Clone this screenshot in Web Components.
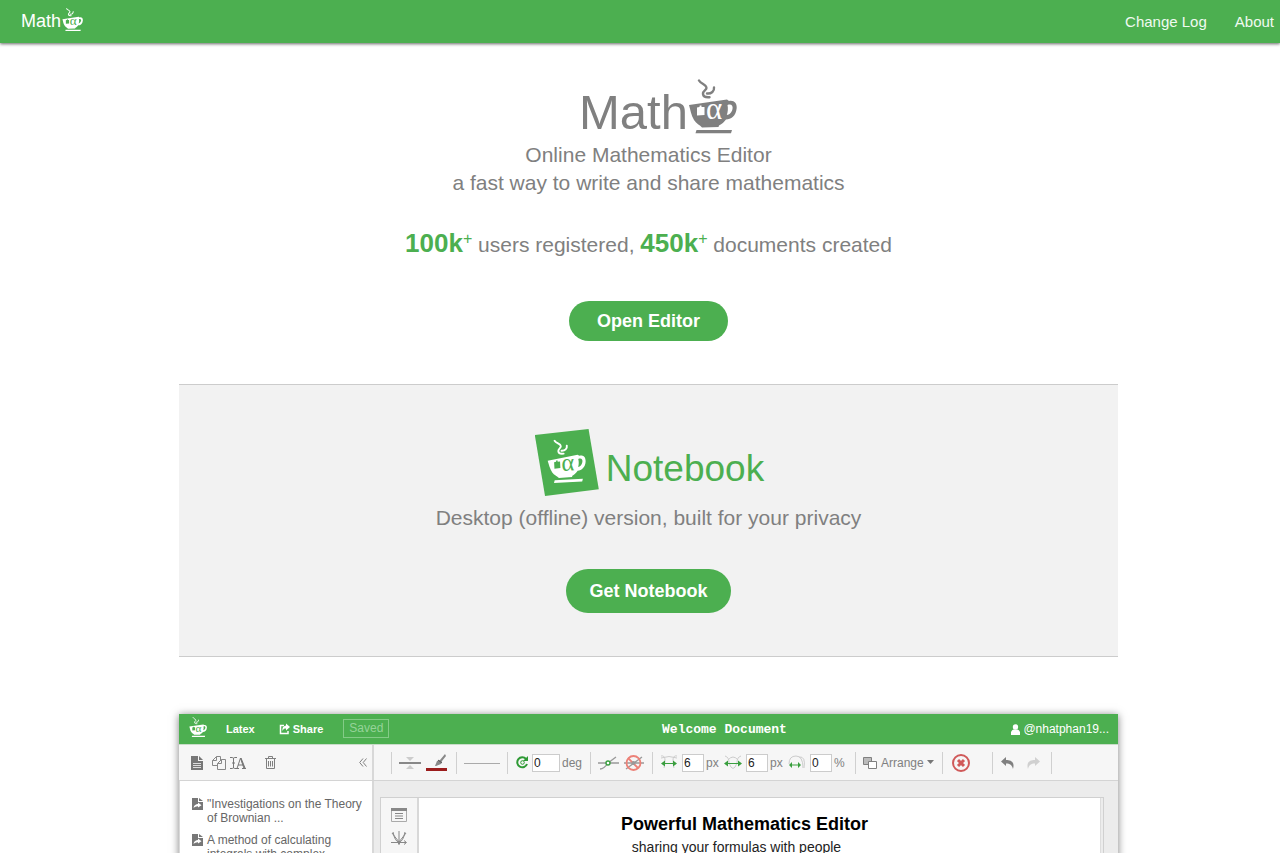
<!DOCTYPE html>
<html lang="en">
<head>
<meta charset="utf-8">
<title>Mathcha</title>
<style>
body { margin: 0; background: #fff; color: #808080; font-family: "Liberation Sans", Arial, sans-serif; }
</style>
</head>
<body>
<mc-header></mc-header>
<mc-main>
  <mc-hero></mc-hero>
  <mc-notebook></mc-notebook>
  <mc-editor>
    <mc-doc-item>"Investigations on the Theory of Brownian ...</mc-doc-item>
    <mc-doc-item>A method of calculating integrals with complex</mc-doc-item>
  </mc-editor>
</mc-main>
<script>
class Base extends HTMLElement {
  constructor() {
    super();
    const t = document.createElement('template');
    t.innerHTML = this.constructor.markup;
    this.attachShadow({ mode: 'open' }).append(t.content.cloneNode(true));
  }
}

/* Tea cup; fill follows currentColor, cut-outs follow --cut */
customElements.define('mc-cup', class extends Base {
  static markup = `
<style>:host{display:block;aspect-ratio:49/55;flex:none}svg{display:block;width:100%;height:100%}text{font:31px "Liberation Serif",serif;fill:var(--cut,#fff)}</style>
<svg viewBox="0 0 49 55" aria-hidden="true">
<g fill="none" stroke="currentColor" stroke-width="2.4" stroke-linecap="round"><path d="M11 1.500C13 5 18 5.500 18.500 8.500C19 11 14.500 12 15 15C15.300 17.500 18 18.500 21.500 18.200"/><path d="M26 8.500C26.500 12 23.500 15 19 14.500"/></g>
<path fill="currentColor" d="M1 26L39 20.500L41 22C46 21 49 24 48.700 29C48 37 43 40.500 38 40.500C36 43 34 45 31 46.500L30.500 48L14 48.500C12 46 8 44.500 6 41C3 36 2.500 31 1 26Z"/>
<path fill="var(--cut,#fff)" d="M39.500 26C43 24.500 45.300 26.500 44.500 30C43.500 34 41.500 35.500 38.800 36C40 33 40.200 29 39.500 26ZM9 28.500L11.500 28L11.700 26.500L13.500 26.500L13.500 28L16.500 28L16.500 36L9 36.500Z"/>
<text x="18" y="40">α</text>
<path fill="currentColor" d="M8.500 51H44L43 54.300H7.500Z"/></svg>`;
});

customElements.define('mc-header', class extends Base {
  static markup = `
<style>:host{display:block}
header{display:flex;justify-content:space-between;align-items:center;height:43px;padding:0 6px 0 21px;background:#4caf50;color:#fff;box-shadow:0 1px 3px rgba(0,0,0,.6)}
.logo{display:flex;align-items:center;gap:1px;font-size:18px;color:inherit;text-decoration:none}
mc-cup{width:21px;--cut:#4caf50;padding-bottom:4px}
nav{display:flex;gap:28px;font-size:15px}nav a{color:#f0faf0;text-decoration:none}</style>
<header><a class="logo" href="#">Math<mc-cup></mc-cup></a><nav><a href="#log">Change Log</a><a href="#about">About</a></nav></header>`;
});

customElements.define('mc-main', class extends Base {
  static markup = `<style>:host{display:block;padding-left:17px}main{max-width:939px;margin:0 auto}</style><main><slot></slot></main>`;
});

customElements.define('mc-button', class extends Base {
  static markup = `<style>:host{display:block}button{display:block;margin:0 auto;border:0;border-radius:22px;height:var(--h,40px);padding:0 var(--pad,28px);background:#4caf50;color:#fff;font:bold 18px "Liberation Sans",Arial,sans-serif;cursor:pointer}</style><button type="button"><slot></slot></button>`;
});

customElements.define('mc-hero', class extends Base {
  static markup = `
<style>:host{display:block;padding:36px 0 43px;text-align:center;font-size:21px;line-height:28px}
h1{display:flex;justify-content:center;height:62px;margin:0;padding-left:19px;font-weight:400;font-size:49px;line-height:66px}
mc-cup{width:49px;height:55px}p{margin:0}
.stats{margin:30px 0 40px;line-height:32px}b{font-size:26px}b,sup{color:#4caf50}sup{font-size:16px;line-height:0}</style>
<h1>Math<mc-cup></mc-cup></h1>
<p>Online Mathematics Editor<br>a fast way to write and share mathematics</p>
<p class="stats"><b>100k</b><sup>+</sup> users registered, <b>450k</b><sup>+</sup> documents created</p>
<mc-button>Open Editor</mc-button>`;
});

customElements.define('mc-notebook', class extends Base {
  static markup = `
<style>:host{display:block}
section{padding:44px 0 43px;background:#f2f2f2;border:solid #ccc;border-width:1px 0;text-align:center}
h2{display:flex;justify-content:center;gap:7px;margin:0 0 8px;padding-left:2px;height:67px;font-weight:400;font-size:37px;line-height:79px;color:#4caf50}
.tile{display:grid;place-items:center;width:64px;height:67px;background:#4caf50;clip-path:polygon(0 9%,84% 0,100% 90%,16% 100%)}
mc-cup{width:39px;color:#fff;--cut:#4caf50;transform:rotate(-3deg);padding-bottom:4px}
p{margin:0 0 37px;font-size:21px;line-height:28px}mc-button{--h:44px;--pad:23px}</style>
<section><h2><span class="tile"><mc-cup></mc-cup></span>Notebook</h2><p>Desktop (offline) version, built for your privacy</p><mc-button>Get Notebook</mc-button></section>`;
});

customElements.define('mc-doc-item', class extends Base {
  static markup = `
<style>:host{display:flex;gap:4px;margin-bottom:8px;font-size:12px;line-height:14px;color:#666}svg{flex:none;margin-top:1px}</style>
<svg width="11" height="12" viewBox="0 0 11 12" aria-hidden="true"><path fill="#777" d="M0 0H6V4H11V12H0Z M7 0L11 3H7Z"/><path d="M1.500 10C2 7 4 6 6 6V4.500L9.500 7.300L6 9.500V8.300C4 8.200 3 9 1.500 10Z" fill="#fff"/></svg><span><slot></slot></span>`;
});

/* Toolbar number box with its icon and unit */
customElements.define('mc-field', class extends Base {
  static icons = {
    turn: '<path d="M11 4A5 5 0 1 0 12 9" fill="none" stroke="#2f9a35" stroke-width="2"/><path d="M13 1V6H8Z" fill="#2f9a35"/><circle cx="7.500" cy="7.500" r="1.800" fill="none" stroke="#2f9a35"/>',
    inner: '<path d="M1 1C5 0 6 4 4 13M17 1C13 0 12 4 14 13M1 3Q9 0 17 3" fill="none" stroke="#ccc"/><path d="M1 8.500L5 5.500V8H13V5.500L17 8.500L13 11.500V9H5V11.500Z" fill="#3a9f3f"/>',
    outer: '<path d="M1 1Q5 2 5 8Q9 19 13 8Q13 2 17 1M4 5Q9-1 14 5" fill="none" stroke="#ccc"/><path d="M0 8.500L4 5.500V8H14V5.500L18 8.500L14 11.500V9H4V11.500Z" fill="#3a9f3f"/>',
    loop: '<path d="M1 9Q1 1 8 1Q15 1 15 13M11 2Q18 1 16 13" fill="none" stroke="#ccc"/><path d="M1 10L4 7V9.500H10V7L13 10L10 13V10.500H4V13Z" fill="#3a9f3f"/>'
  };
  static markup = `
<style>:host{display:block}label{display:flex;align-items:center;gap:2px;color:#808080;font-size:12px}svg{flex:none}
input{box-sizing:border-box;width:var(--w,22px);height:18px;margin:0;padding:0 1px;border:1px solid #ccc;background:#fff;color:#222;font:12px "Liberation Sans",Arial,sans-serif}.unit{width:var(--u,13px)}</style>
<label><svg height="15" aria-hidden="true"></svg><input type="text"><span class="unit"></span></label>`;
  connectedCallback() {
    const s = this.shadowRoot, kind = this.getAttribute('kind'), svg = s.querySelector('svg');
    svg.innerHTML = this.constructor.icons[kind];
    svg.setAttribute('width', kind === 'turn' ? 15 : 20);
    s.querySelector('input').value = this.getAttribute('value');
    s.querySelector('.unit').textContent = this.getAttribute('unit');
  }
});

customElements.define('mc-toolbar', class extends Base {
  static markup = `
<style>:host{display:flex;align-items:center;height:35px;background:#f6f6f6;border-bottom:1px solid #d4d4d4;font-size:12px;color:#808080}
button{display:flex;align-items:center;gap:3px;padding:0;border:0;background:none;color:inherit;font:inherit}svg{display:block;flex:none}
.side{box-sizing:border-box;display:flex;align-items:center;width:195px;height:35px;padding:0 5px 0 12px;border-right:2px solid #d8d8d8}
.side .fold{margin-left:auto}.trash{margin-left:19px}.copy{margin:0 4px 0 9px}
.g{display:flex;align-items:center;gap:5px;height:22px;padding:0 8px 0 7px;border-left:1px solid #d0d0d0}
.first{margin-left:17px}.line{padding-right:7px}.rot{--w:28px;--u:20px}.del{padding-right:22px}.hist{gap:11px;padding-right:10px;border-right:1px solid #d0d0d0}</style>
<div class="side">
<button aria-label="New"><svg width="12" height="14"><path fill="#777" d="M0 0H7V5H12V14H0ZM8 0L12 4H8Z"/><path d="M2 7.500H10M2 9.500H10M2 11.500H10" stroke="#ddd"/></svg></button>
<button class="copy" aria-label="Copy"><svg width="14" height="14" fill="#f6f6f6" stroke="#888"><path d="M4.500.500H8.500V9.500H.500V4.500ZM4.500.500V4.500H.500"/><path d="M9.500 3.500H13.500V13.500H5.500V7.500ZM9.500 3.500V7.500H5.500"/></svg></button>
<button aria-label="Rename"><svg width="16" height="14" fill="none" stroke="#777"><path d="M0 1.500H2.500Q3.500 1.500 3.500 3V11Q3.500 12.500 2.500 12.500H0M7 1.500H4.500Q3.500 1.500 3.500 3M7 12.500H4.500Q3.500 12.500 3.500 11M2 7H5"/><path d="M7 12.500L10.500 2L14 12.500M8 9H13M6 12.500H9M12 12.500H16M10.500 2L14.500 12M11 2L15 12"/></svg></button>
<button class="trash" aria-label="Delete"><svg width="11" height="13" fill="none" stroke="#808080"><path d="M0 2.500H11M3.500 2V.500H7.500V2M1.500 3V12.500H9.500V3M3.500 5V10.500M5.500 5V10.500M7.500 5V10.500"/></svg></button>
<button class="fold" aria-label="Collapse"><svg width="8" height="9" fill="none" stroke="#808080"><path d="M4 .500L.700 4.500L4 8.500M7.500 .500L4.200 4.500L7.500 8.500"/></svg></button>
</div>
<div class="g first">
<button aria-label="Spacing"><svg width="22" height="16"><path d="M0 8H22" stroke="#888" stroke-width="2"/><path d="M7 2H15L11 6ZM7 14H15L11 10Z" fill="#ccc"/></svg></button>
<button aria-label="Line colour"><svg width="22" height="18"><path d="M0 14H21V17H0Z" fill="#9b1c1c"/><path d="M9 12L11 7L14 6L19 0L20 2L16 7L15 10L10 12Z" fill="#888"/><path d="M12 6L16 9" stroke="#555"/></svg></button></div>
<div class="g line"><button aria-label="Line style"><svg width="36" height="4"><path d="M0 2.500H36" stroke="#aaa"/></svg></button></div>
<div class="g"><mc-field class="rot" kind="turn" value="0" unit="deg"></mc-field></div>
<div class="g">
<button aria-label="Add point"><svg width="21" height="14"><path d="M0 7H21M2 13Q6 13 10 7Q14 4 18 1" fill="none" stroke="#999" stroke-width="1.300"/><circle cx="10" cy="7" r="2" fill="#fff" stroke="#3a9f3f" stroke-width="1.400"/></svg></button>
<button aria-label="Remove point"><svg width="20" height="18"><path d="M0 9H20M2 15L18 3" stroke="#999" stroke-width="1.300"/><circle cx="9.500" cy="9" r="7" fill="none" stroke="#ec8178" stroke-width="1.800"/><path d="M4 4L14 14" stroke="#ec8178" stroke-width="1.800"/><circle cx="9.500" cy="9" r="2" fill="#999"/></svg></button></div>
<div class="g"><mc-field kind="inner" value="6" unit="px"></mc-field><mc-field kind="outer" value="6" unit="px"></mc-field><mc-field kind="loop" value="0" unit="%"></mc-field></div>
<div class="g"><button><svg width="15" height="12" stroke="#808080"><path d="M.500.500H8.500V7.500H.500Z" fill="#bbb"/><path d="M5.500 4.500H13.500V11.500H5.500Z" fill="#fff"/></svg>Arrange<svg width="7" height="5"><path d="M0 0H7L3.500 4Z" fill="#777"/></svg></button></div>
<div class="g del"><button aria-label="Remove"><svg width="20" height="20"><circle cx="11" cy="10" r="8" fill="none" stroke="#d05a5a" stroke-width="2"/><path d="M8 7L14 13M14 7L8 13" stroke="#d05a5a" stroke-width="3"/></svg></button></div>
<div class="g hist">
<button aria-label="Undo"><svg width="15" height="12"><path fill="#808080" d="M1 4.500L6 0V3C11 3 15 5 13 12C12 8 10 6.500 6 6.500V9Z"/></svg></button>
<button aria-label="Redo"><svg width="15" height="12"><path fill="#d0d0d0" d="M14 4.500L9 0V3C4 3 0 5 2 12C3 8 5 6.500 9 6.500V9Z"/></svg></button></div>`;
});

customElements.define('mc-editor', class extends Base {
  static markup = `
<style>:host{display:block;margin-top:57px;box-shadow:0 1px 8px rgba(0,0,0,.5);background:#ececec}
.bar{display:grid;grid-template-columns:47fr auto 32fr;align-items:center;height:30px;padding:0 9px 0 10px;background:#4caf50;color:#fff;font-size:12px;border-bottom:1px solid #c9dcc9}
.left,.user{display:flex;align-items:center}.left{font-size:11px;font-weight:bold}a{color:inherit;text-decoration:none}
mc-cup{width:18px;--cut:#4caf50;margin-right:19px;padding-bottom:4px}.share{display:flex;gap:3px;margin:0 20px 0 24px}
.saved{border:1px solid #84cb87;color:#96d399;font-size:12px;font-weight:400;line-height:17px;padding:0 5px}
h3{margin:0;font:bold 13px "Liberation Mono",monospace}.user{justify-content:flex-end;gap:3px}
.body{display:grid;grid-template-columns:195px 1fr}
.docs{box-sizing:border-box;padding:16px 4px 30px 12px;background:#fff;border-left:1px solid #d8d8d8;border-right:2px solid #d8d8d8}
.work{display:grid;grid-template-columns:38px 1fr;margin:16px 14px 0 6px;border:1px solid #d0d0d0;border-bottom:0}
.tools{display:flex;flex-direction:column;align-items:center;gap:8px;padding-top:10px;background:#f6f6f6;border-right:2px solid #d8d8d8}
.tools button{padding:0;border:0;background:none}svg{display:block}
.page{background:#fff;color:#000;text-align:center;border-right:1px solid #ddd;margin-right:2px;padding:14px 30px 0 0}
h4{margin:0;font-size:18px;line-height:24px}p{margin:0;padding-right:16px;font-size:14px;line-height:22px;color:#222}</style>
<div class="bar"><div class="left"><mc-cup></mc-cup><a href="#latex">Latex</a><a class="share" href="#share"><svg width="11" height="12"><path d="M5 2.500H1.500V10.500H9V8" fill="none" stroke="#fff" stroke-width="1.500"/><path d="M11 4L7 .500V2.500C4 3 3 5 3.500 8C4.500 6 5 5.500 7 5.500V7.500Z" fill="#fff"/></svg>Share</a><span class="saved">Saved</span></div>
<h3>Welcome Document</h3>
<a class="user" href="#user"><svg width="9" height="11" fill="#fff"><circle cx="4.500" cy="3" r="2.700"/><path d="M0 11V8Q1 5.500 2.500 5.500H6.500Q8 5.500 9 8V11Z"/></svg>@nhatphan19...</a></div>
<mc-toolbar></mc-toolbar>
<div class="body"><div class="docs"><slot></slot></div>
<div class="work"><div class="tools">
<button aria-label="Outline"><svg width="16" height="14"><path d="M.500.500H15.500V13.500H.500Z" fill="none" stroke="#aaa"/><path d="M0 0H16V3H0Z" fill="#888"/><path d="M4 5.500H12M4 8H12M4 10.500H12" stroke="#888"/></svg></button>
<button aria-label="Graph"><svg width="16" height="15" fill="none" stroke="#888"><path d="M0 12.500H15M8 15V1M6 12L8 14L10 12M13 10.500L15.500 12.500L13 14.500M2 2Q4 12 8 12Q12 12 14 2M1 3L8 12L15 3"/></svg></button></div>
<div class="page"><h4>Powerful Mathematics Editor</h4><p>sharing your formulas with people</p></div></div></div>`;
});
</script>
</body>
</html>
